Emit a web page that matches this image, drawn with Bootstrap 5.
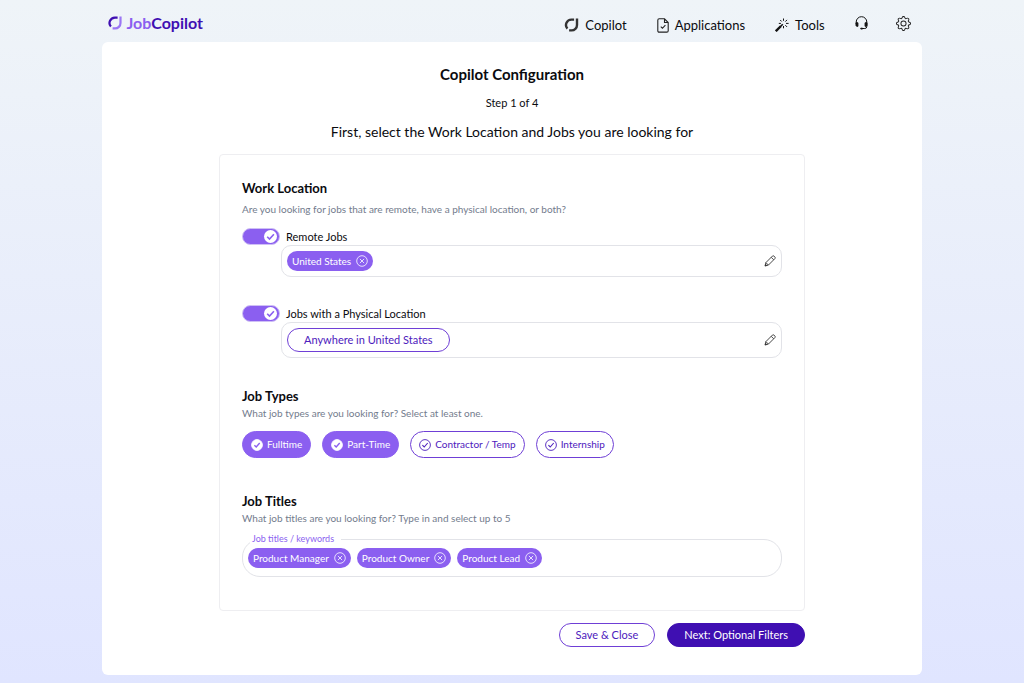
<!DOCTYPE html>
<html lang="en">
<head>
<meta charset="utf-8">
<meta name="viewport" content="width=device-width, initial-scale=1">
<title>JobCopilot – Copilot Configuration</title>
<link href="https://cdn.jsdelivr.net/npm/bootstrap@5.3.0/dist/css/bootstrap.min.css" rel="stylesheet">
<style>
  :root { --violet: #8b5ff0; --deep: #3f0fb2; --outline: #6f3fd6; --line: #e2e3e8; }
  body { font-family: "Lato", sans-serif; font-size: 11px; line-height: 16px; color: #0b0b0f; min-height: 100vh;
         background: linear-gradient(#eff4f8, #e0e5ff) no-repeat; }
  svg { display: block; flex: none; }
  .shell { width: 80%; margin: 0 auto; }
  .topbar { min-height: 42px; padding: 4px 11px 0 6px; }
  .brand { font-size: 16px; font-weight: 700; line-height: 20px; color: var(--deep); gap: 4px; }
  .brand-light { color: var(--violet); }
  .topbar-link { color: #0b0b0f; font-size: 13px; line-height: 20px; gap: 6px; padding-top: 4px; }
  .topbar-links { gap: 30px; }
  .icon-links { gap: 28px; }
  .page-panel { background: #fff; border-radius: 6px; padding: 22px 16px 28px; margin-bottom: 8px; }
  .page-title { font-size: 15px; font-weight: 700; line-height: 20px; margin: 0 0 11px; }
  .page-step { margin: 0 0 11px; }
  .page-lead { font-size: 14px; line-height: 20px; margin: 0 0 12px; }
  .config { max-width: 586px; }
  .config-box { border: 1px solid #eeeef1; border-radius: 4px; padding: 23px 22px 33px; }
  .section-title { font-size: 13px; font-weight: 700; line-height: 20px; margin: 0; }
  .hint { font-size: 10px; line-height: 14px; color: #737c8d; margin: 0; }
  .section-gap { margin-top: 28px; }
  .section-gap-lg { margin-top: 33px; }
  .switch-row { gap: 6px; min-height: 17px; line-height: 17px; }
  .switch-row .form-check-input { width: 38px; height: 17px; margin: 0; float: none; border: 1px solid #cfc0f5; border-radius: 9px; }
  .switch-row .form-check-input:checked { background-color: var(--violet); background-position: right center; background-size: 17px 15px;
    background-image: url("data:image/svg+xml,%3csvg xmlns='http://www.w3.org/2000/svg' viewBox='0 0 17 15'%3e%3ccircle cx='8.5' cy='7.5' r='6.5' fill='%23fff'/%3e%3cpath d='M5.2 7.8l2.3 2.3 4.4-4.8' fill='none' stroke='%238b5ff0' stroke-width='1.6'/%3e%3c/svg%3e"); }
  .field-box { border: 1px solid var(--line); border-radius: 10px; margin-left: 39px; padding: 5px; min-height: 32px; }
  .chip { background: var(--violet); color: #fff; font-size: 10px; line-height: 20px; border-radius: 10px; padding: 0 5px; gap: 5px; }
  .bare { border: 0; background: none; padding: 0; color: inherit; }
  .pill { font-size: 11px; line-height: 16px; border-radius: 12px; padding: 3px 16px; border: 1px solid var(--outline); color: #4d20bd; background: #fff; }
  .pill:hover { border-color: var(--deep); color: var(--deep); }
  .pill-solid, .pill-solid:hover { background: var(--deep); border-color: var(--deep); color: #fff; }
  .type-list { gap: 11px; margin-top: 11px; }
  .type-pill { display: flex; align-items: center; gap: 4px; font-size: 10px; line-height: 25px; border: 1px solid var(--outline);
    border-radius: 14px; padding: 0 8px; color: #4d20bd; cursor: pointer; }
  .btn-check:checked + .type-pill { background: var(--violet); border-color: var(--violet); color: #fff; }
  .type-pill .tick-fill { fill: none; stroke: currentColor; stroke-width: .9; }
  .type-pill .tick-mark { fill: none; stroke: currentColor; stroke-width: 1.1; }
  .btn-check:checked + .type-pill .tick-fill { fill: #fff; stroke: #fff; }
  .btn-check:checked + .type-pill .tick-mark { stroke: var(--violet); stroke-width: 1.4; }
  .titles-box { border: 1px solid var(--line); border-radius: 18px; min-height: 38px; padding: 5px; gap: 6px; margin-top: 14px; }
  .titles-label { top: -8px; left: 7px; padding: 0 7px 0 2px; font-size: 9px; line-height: 14px; color: var(--violet); background: #fff; }
  .titles-input { border: 0; outline: 0; background: none; min-width: 40px; font-size: 10px; }
</style>
</head>
<body>
<svg class="d-none" aria-hidden="true">
  <symbol id="close" viewBox="0 0 12 12"><g fill="none" stroke="currentColor" stroke-width=".8"><circle cx="6" cy="6" r="5.3"/><path d="M3.900 3.900l4.200 4.200M8.100 3.900L3.900 8.100"/></g></symbol>
  <symbol id="pencil" viewBox="0 0 12 12"><g fill="none" stroke="#333" stroke-width=".9"><path d="M1 11l.9-3.400L8.400 1.100q.8-.7 1.600 0l.9.9q.7.8 0 1.600l-6.500 6.500zM7.200 2.300l2.500 2.500M1.900 7.600l2.500 2.500"/></g><path d="M.8 11.200l.7-2.400 1.700 1.700z" fill="#333"/></symbol>
  <symbol id="tick" viewBox="0 0 12 12"></symbol>
</svg>

<header class="shell topbar d-flex align-items-center justify-content-between">
  <a class="brand d-flex align-items-center text-decoration-none" href="#" aria-label="JobCopilot">
    <svg width="14" height="14" viewBox="0 0 14 14" fill="none" stroke-width="2.2"><path d="M9.600 1.600H7A5.400 5.400 0 0 0 2.900 10.600" stroke="#3f0fb2"/><path d="M4.600 12.400H7A5.400 5.400 0 0 0 12.500 7V.5" stroke="#9b76f4"/></svg>
    <span><span class="brand-light">Job</span>Copilot</span>
  </a>
  <nav class="d-flex align-items-center topbar-links" aria-label="Main">
    <a class="topbar-link d-flex align-items-center text-decoration-none" href="#">
      <svg width="15" height="14" viewBox="0 0 14 14" fill="none" stroke-width="2.4" stroke="#333"><path d="M9.600 1.600H7A5.400 5.400 0 0 0 2.900 10.600"/><path d="M4.600 12.400H7A5.400 5.400 0 0 0 12.500 7V.5"/></svg>
      Copilot</a>
    <a class="topbar-link d-flex align-items-center text-decoration-none" href="#">
      <svg width="12" height="15" viewBox="0 0 12 15" fill="none" stroke="#222" stroke-width="1.1"><path d="M2.200.8h5.300l3.700 3.700v8.200q0 1.400-1.400 1.400H2.200Q.8 14.100.8 12.700V2.200Q.8.8 2.200.8zM7.500.8v3.700h3.700M3.800 8.700l1.600 1.600 3-3.200"/></svg>
      Applications</a>
    <a class="topbar-link d-flex align-items-center text-decoration-none" href="#">
      <svg width="14" height="14" viewBox="0 0 14 14" stroke="#111" fill="none"><path d="M.8 13.200L6 8" stroke-width="2.400"/><path d="M6 8l1.800-1.800" stroke-width="1.600"/><path d="M8.500.5v2.300M8.500 8v2.300M3.800 5.400h2.100M11 5.400h2.600M5.200 2l1.500 1.500M10.300 3.600L12 1.900M10.300 7.200L12 8.900" stroke-width="1"/></svg>
      Tools</a>
    <div class="icon-links d-flex align-items-center">
      <a href="#" aria-label="Support"><svg width="13" height="14" viewBox="0 0 13 14" fill="none" stroke="#111"><path d="M1.200 8V6a5.300 5.300 0 0 1 10.600 0v4.500q0 2-2 2H7"/><path d="M1 6.800h1.900v3.500H2q-1-.1-1-1zM12 6.800h-1.900v3.500H11q1-.1 1-1zM5.800 12.200h1.700v.8H5.800z" fill="#111"/></svg></a>
      <a href="#" aria-label="Settings"><svg width="15" height="15" viewBox="0 0 16 16" fill="#222"><path d="M8 4.754a3.246 3.246 0 1 0 0 6.492 3.246 3.246 0 0 0 0-6.492zM5.754 8a2.246 2.246 0 1 1 4.492 0 2.246 2.246 0 0 1-4.492 0z"/><path d="M9.796 1.343c-.527-1.790-3.065-1.790-3.592 0l-.094.319a.873.873 0 0 1-1.255.520l-.292-.160c-1.640-.892-3.433.902-2.540 2.541l.159.292a.873.873 0 0 1-.520 1.255l-.319.094c-1.790.527-1.790 3.065 0 3.592l.319.094a.873.873 0 0 1 .520 1.255l-.160.292c-.892 1.640.901 3.434 2.541 2.540l.292-.159a.873.873 0 0 1 1.255.520l.094.319c.527 1.790 3.065 1.790 3.592 0l.094-.319a.873.873 0 0 1 1.255-.520l.292.160c1.640.893 3.434-.902 2.540-2.541l-.159-.292a.873.873 0 0 1 .520-1.255l.319-.094c1.790-.527 1.790-3.065 0-3.592l-.319-.094a.873.873 0 0 1-.520-1.255l.160-.292c.893-1.640-.902-3.433-2.541-2.540l-.292.159a.873.873 0 0 1-1.255-.520l-.094-.319zm-2.633.283c.246-.835 1.428-.835 1.674 0l.094.319a1.873 1.873 0 0 0 2.693 1.115l.291-.160c.764-.415 1.600.420 1.184 1.185l-.159.292a1.873 1.873 0 0 0 1.116 2.692l.318.094c.835.246.835 1.428 0 1.674l-.319.094a1.873 1.873 0 0 0-1.115 2.693l.160.291c.415.764-.420 1.600-1.185 1.184l-.291-.159a1.873 1.873 0 0 0-2.693 1.116l-.094.318c-.246.835-1.428.835-1.674 0l-.094-.319a1.873 1.873 0 0 0-2.692-1.115l-.292.160c-.764.415-1.600-.420-1.184-1.185l.159-.291A1.873 1.873 0 0 0 1.945 8.930l-.319-.094c-.835-.246-.835-1.428 0-1.674l.319-.094A1.873 1.873 0 0 0 3.060 4.377l-.160-.292c-.415-.764.420-1.600 1.185-1.184l.292.159a1.873 1.873 0 0 0 2.692-1.115l.094-.319z"/></svg></a>
    </div>
  </nav>
</header>

<main class="shell page-panel">
  <div class="text-center">
    <h1 class="page-title">Copilot Configuration</h1>
    <p class="page-step">Step 1 of 4</p>
    <p class="page-lead">First, select the Work Location and Jobs you are looking for</p>
  </div>
  <form class="config mx-auto">
    <div class="config-box">
      <section>
        <h2 class="section-title">Work Location</h2>
        <p class="hint my-1 pb-1">Are you looking for jobs that are remote, have a physical location, or both?</p>
        <div class="switch-row form-switch d-flex align-items-center p-0 pt-1">
          <input class="form-check-input" type="checkbox" role="switch" id="remote" checked>
          <label for="remote">Remote Jobs</label>
        </div>
        <div class="field-box d-flex align-items-center justify-content-between">
          <span class="chip d-flex align-items-center">United States <button type="button" class="bare" aria-label="Remove United States"><svg width="12" height="12"><use href="#close"/></svg></button></span>
          <button type="button" class="bare" aria-label="Edit remote locations"><svg width="12" height="12"><use href="#pencil"/></svg></button>
        </div>
        <div class="switch-row form-switch section-gap d-flex align-items-center p-0">
          <input class="form-check-input" type="checkbox" role="switch" id="physical" checked>
          <label for="physical">Jobs with a Physical Location</label>
        </div>
        <div class="field-box d-flex align-items-center justify-content-between">
          <button type="button" class="pill">Anywhere in United States</button>
          <button type="button" class="bare" aria-label="Edit physical locations"><svg width="12" height="12"><use href="#pencil"/></svg></button>
        </div>
      </section>

      <section class="section-gap">
        <h2 class="section-title">Job Types</h2>
        <p class="hint">What job types are you looking for? Select at least one.</p>
        <div class="type-list d-flex flex-wrap">
          <div><input type="checkbox" class="btn-check" id="full" checked><label class="type-pill" for="full"><svg width="12" height="12" viewBox="0 0 12 12"><circle class="tick-fill" cx="6" cy="6" r="5.400"/><path class="tick-mark" d="M3.400 6.200l1.800 1.800 3.500-4"/></svg>Fulltime</label></div>
          <div><input type="checkbox" class="btn-check" id="part" checked><label class="type-pill" for="part"><svg width="12" height="12" viewBox="0 0 12 12"><circle class="tick-fill" cx="6" cy="6" r="5.400"/><path class="tick-mark" d="M3.400 6.200l1.800 1.800 3.500-4"/></svg>Part-Time</label></div>
          <div><input type="checkbox" class="btn-check" id="temp"><label class="type-pill" for="temp"><svg width="12" height="12" viewBox="0 0 12 12"><circle class="tick-fill" cx="6" cy="6" r="5.400"/><path class="tick-mark" d="M3.400 6.200l1.800 1.800 3.500-4"/></svg>Contractor / Temp</label></div>
          <div><input type="checkbox" class="btn-check" id="intern"><label class="type-pill" for="intern"><svg width="12" height="12" viewBox="0 0 12 12"><circle class="tick-fill" cx="6" cy="6" r="5.400"/><path class="tick-mark" d="M3.400 6.200l1.800 1.800 3.500-4"/></svg>Internship</label></div>
        </div>
      </section>

      <section class="section-gap-lg">
        <h2 class="section-title">Job Titles</h2>
        <p class="hint">What job titles are you looking for? Type in and select up to 5</p>
        <div class="titles-box position-relative d-flex flex-wrap align-items-center">
          <label class="titles-label position-absolute" for="titles">Job titles / keywords</label>
          <span class="chip d-flex align-items-center">Product Manager <button type="button" class="bare" aria-label="Remove Product Manager"><svg width="12" height="12"><use href="#close"/></svg></button></span>
          <span class="chip d-flex align-items-center">Product Owner <button type="button" class="bare" aria-label="Remove Product Owner"><svg width="12" height="12"><use href="#close"/></svg></button></span>
          <span class="chip d-flex align-items-center">Product Lead <button type="button" class="bare" aria-label="Remove Product Lead"><svg width="12" height="12"><use href="#close"/></svg></button></span>
          <input class="titles-input flex-fill" type="text" id="titles">
        </div>
      </section>
    </div>
    <div class="d-flex justify-content-end gap-2 mt-2 pt-1">
      <button type="button" class="pill me-1">Save &amp; Close</button>
      <button type="submit" class="pill pill-solid">Next: Optional Filters</button>
    </div>
  </form>
</main>
<script src="https://cdn.jsdelivr.net/npm/bootstrap@5.3.0/dist/js/bootstrap.bundle.min.js"></script>
</body>
</html>
